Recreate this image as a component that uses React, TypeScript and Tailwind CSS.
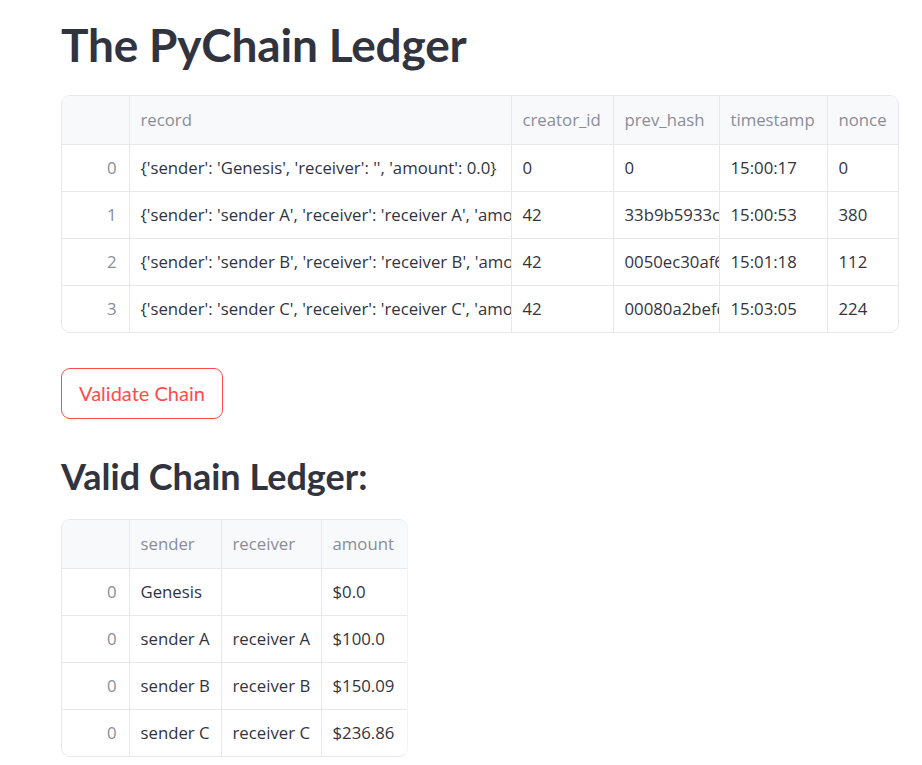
import React from "react";

type Col = { name: string; cls: string };
type Row = { idx: string; cells: string[] };

const cellFont = "font-['Open_Sans',sans-serif] text-[16.75px]";

function DataTable({ cols, rows, wrapCls, tableCls }: { cols: Col[]; rows: Row[]; wrapCls: string; tableCls: string }) {
  return (
    <div className={"overflow-hidden rounded-[9px] border border-[#e6e8ec] bg-white " + wrapCls}>
      <table className={"table-fixed border-collapse " + tableCls}>
        <colgroup>
          <col className="w-[67px]" />
          {cols.map((c, i) => (
            <col key={i} className={c.cls} />
          ))}
        </colgroup>
        <thead>
          <tr className="h-[48px] bg-[#f8f9fb]">
            <th className="border-b border-r border-[#e6e8ec]"></th>
            {cols.map((c, i) => (
              <th
                key={i}
                className={
                  "overflow-hidden whitespace-nowrap border-b border-[#e6e8ec] pb-[1px] pl-[11px] text-left font-normal text-[#8a8d98] " +
                  cellFont +
                  (i < cols.length - 1 ? " border-r" : "")
                }
              >
                {c.name}
              </th>
            ))}
          </tr>
        </thead>
        <tbody>
          {rows.map((r, ri) => (
            <tr key={ri} className="h-[47px]">
              <td
                className={
                  "border-r border-[#e6e8ec] pr-[12px] text-right text-[#8a8d98] " +
                  cellFont +
                  (ri < rows.length - 1 ? " border-b" : "")
                }
              >
                {r.idx}
              </td>
              {r.cells.map((c, ci) => (
                <td
                  key={ci}
                  className={
                    "overflow-hidden whitespace-nowrap border-[#e6e8ec] pl-[11px] text-[#31333f] " +
                    cellFont +
                    (ci < r.cells.length - 1 ? " border-r" : "") +
                    (ri < rows.length - 1 ? " border-b" : "")
                  }
                >
                  {c}
                </td>
              ))}
            </tr>
          ))}
        </tbody>
      </table>
    </div>
  );
}

export default function App() {
  const cols1: Col[] = [
    { name: "record", cls: "w-[382px]" },
    { name: "creator_id", cls: "w-[102px]" },
    { name: "prev_hash", cls: "w-[106px]" },
    { name: "timestamp", cls: "w-[108px]" },
    { name: "nonce", cls: "w-[71px]" },
  ];
  const rows1: Row[] = [
    { idx: "0", cells: ["{'sender': 'Genesis', 'receiver': '', 'amount': 0.0}", "0", "0", "15:00:17", "0"] },
    { idx: "1", cells: ["{'sender': 'sender A', 'receiver': 'receiver A', 'amount': 100.0}", "42", "33b9b5933c4f1a", "15:00:53", "380"] },
    { idx: "2", cells: ["{'sender': 'sender B', 'receiver': 'receiver B', 'amount': 150.09}", "42", "0050ec30af6b2c", "15:01:18", "112"] },
    { idx: "3", cells: ["{'sender': 'sender C', 'receiver': 'receiver C', 'amount': 236.86}", "42", "00080a2befd91e", "15:03:05", "224"] },
  ];
  const cols2: Col[] = [
    { name: "sender", cls: "w-[92px]" },
    { name: "receiver", cls: "w-[100px]" },
    { name: "amount", cls: "w-[86px]" },
  ];
  const rows2: Row[] = [
    { idx: "0", cells: ["Genesis", "", "$0.0"] },
    { idx: "0", cells: ["sender A", "receiver A", "$100.0"] },
    { idx: "0", cells: ["sender B", "receiver B", "$150.09"] },
    { idx: "0", cells: ["sender C", "receiver C", "$236.86"] },
  ];
  return (
    <div className="min-h-screen w-[922px] bg-white pl-[61px] pt-[16px] font-['Lato',sans-serif] text-[#31333f]">
      <h1 className="text-[46px] font-bold leading-[58px] tracking-[-0.2px] text-[#31333f]">The PyChain Ledger</h1>
      <div className="mt-[21px]">
        <DataTable cols={cols1} rows={rows1} wrapCls="w-[838px]" tableCls="w-[836px]" />
      </div>
      <button className="mt-[35px] flex h-[51px] w-[162px] items-center justify-center rounded-[9px] border border-[#ff4b4b] pb-[2px] text-[20px] text-[#ff4b4b]">
        Validate Chain
      </button>
      <h2 className="mt-[35px] text-[36px] font-bold leading-[44px] text-[#31333f]">Valid Chain Ledger:</h2>
      <div className="mt-[21px]">
        <DataTable cols={cols2} rows={rows2} wrapCls="w-[347px] border-r-[#f3f4f6]" tableCls="w-[345px]" />
      </div>
    </div>
  );
}
